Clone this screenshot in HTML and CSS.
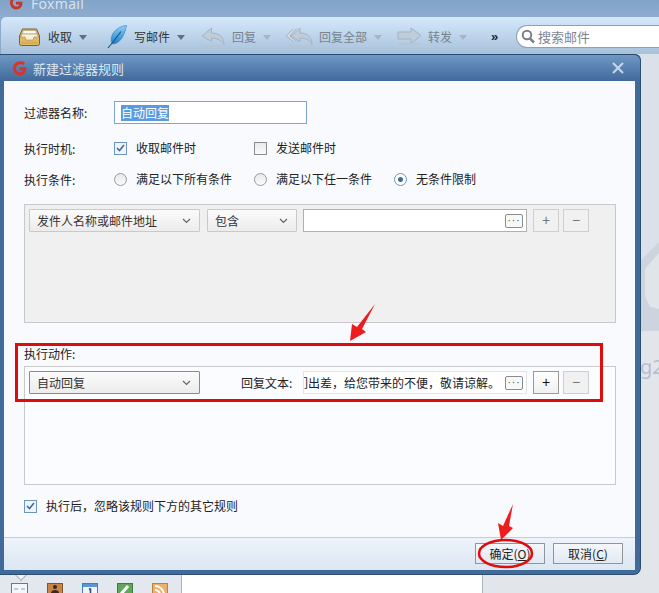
FILE: index.html
```html
<!DOCTYPE html>
<html lang="zh">
<head>
<meta charset="utf-8">
<title>Foxmail</title>
<link rel="stylesheet" href="styles.css">
</head>
<body>
<div class="app">
  <header class="titlebar">
    <svg class="app-logo" width="14" height="14" viewBox="0 0 14 14"><path d="M11.500 2.500C8 .8 3.500 1.500 2.500 5.500 1.700 9.500 4.500 12 7.200 12c2.800 0 4.800-2 4.800-4.800H7" fill="none" stroke="#c8352c" stroke-width="2.800"/></svg>
    <span class="app-name">Foxmail</span>
  </header>
  <nav class="toolbar">
    <div class="tool tool-inbox">
      <svg width="21" height="18" viewBox="0 0 21 18"><path d="M3.500 1h14l3 7v7.500a2 2 0 0 1-2 2h-16a2 2 0 0 1-2-2V8z" fill="#e3ba63" stroke="#7d6129"/><path d="M4.500 2.500h12l1.500 3.500H3z" fill="#fdfaf0" stroke="#a99a70" stroke-width=".6"/><path d="M3 6h15l1.500 3H15l-1 3H7L6 9H1.500z" fill="#f8f1da" stroke="#9c8a5c" stroke-width=".6"/><path d="M2 13.500h17v2.500H2z" fill="#cf9f48" opacity=".5"/></svg>
      <span>收取</span><i class="caret"></i>
    </div>
    <div class="tool tool-write">
      <svg width="20" height="24" viewBox="0 0 20 24"><defs><linearGradient id="feather" x1="0" y1="0" x2="0" y2="1"><stop offset="0" stop-color="#8fd0f5"/><stop offset="1" stop-color="#1f7fc8"/></linearGradient></defs><path d="M19.500 .5C13 1 7 5 4.800 11c-1.300 3.500-.5 6.500.7 8C12 19 17.500 12 19.500.5z" fill="url(#feather)" stroke="#2a7fc0" stroke-width=".6"/><path d="M14 6.500 6 17 1 23" fill="none" stroke="#14507f" stroke-width="1.100"/></svg>
      <span>写邮件</span><i class="caret"></i>
    </div>
    <div class="tool tool-reply off">
      <svg width="25" height="20" viewBox="0 0 25 20"><path d="M10.500 1 1 9l9.500 5.500V11c5 0 9.500 1.500 12.500 6.500C23 10 18 6 10.500 6z" fill="#bfccd9" stroke="#a5b4c4"/><path d="M2 18.500c6 1.200 14 1.200 21 0" fill="none" stroke="#b5c4d3" stroke-width="1.600"/></svg>
      <span>回复</span><i class="caret"></i>
    </div>
    <div class="tool tool-replyall off">
      <svg width="28" height="20" viewBox="0 0 28 20"><path d="M8 2 1 9l7.500 5.500M11.500 1.500 5 9l7 5.500" fill="#d0dbe6" stroke="#a5b4c4"/><path d="M15 1 6 9l9 5.500V11c5 0 9.500 1.500 12 6.500C27 10 22 6 15 6z" fill="#bfccd9" stroke="#a5b4c4"/><path d="M4 18.500c7 1.200 15 1.200 23 0" fill="none" stroke="#b5c4d3" stroke-width="1.600"/></svg>
      <span>回复全部</span><i class="caret"></i>
    </div>
    <div class="tool tool-forward off">
      <svg width="25" height="20" viewBox="0 0 25 20"><path d="M1 5h13V.8L24 8.500 14 16.500V12H1z" fill="#bfccd9" stroke="#a5b4c4"/><path d="M1 17h21" stroke="#b5c4d3" stroke-width="1.600"/></svg>
      <span>转发</span><i class="caret"></i>
    </div>
    <div class="more">»</div>
    <div class="search">
      <svg width="14" height="15" viewBox="0 0 14 15"><circle cx="6" cy="6" r="4.300" fill="none" stroke="#77818c" stroke-width="2"/><path d="m9 9.500 4 4" stroke="#77818c" stroke-width="2.500"/></svg>
      <span>搜索邮件</span>
    </div>
  </nav>
  <main class="workspace">
    <aside class="sidebar">
      <div class="tabs">
        <svg width="17" height="10" viewBox="0 0 17 10"><rect x=".5" y=".5" width="16" height="16" fill="#f4f7fa" stroke="#5d7c99"/><path d="M10 6h4M3 6h4" stroke="#8aa0b6"/></svg>
        <svg width="16" height="10" viewBox="0 0 16 10"><rect x=".5" y=".5" width="15" height="16" fill="#c8854a" stroke="#83552a"/><circle cx="8" cy="4" r="2" fill="#3a2a1c"/><path d="M4 10c0-2 2-3 4-3s4 1 4 3z" fill="#3a2a1c"/></svg>
        <svg width="16" height="10" viewBox="0 0 16 10"><rect x=".5" y=".5" width="15" height="16" fill="#f2f6fb" stroke="#3f7fc2"/><rect x="1" y="1" width="14" height="3" fill="#5b97d4"/><path d="M8.500 5.500V10M7 6.500l1.500-1" stroke="#27527f" stroke-width="1.600" fill="none"/></svg>
        <svg width="16" height="10" viewBox="0 0 16 10"><rect x=".5" y=".5" width="15" height="16" fill="#5fa65a" stroke="#3e7c3a"/><path d="m4 11 7-8" stroke="#fff" stroke-width="3"/></svg>
        <svg width="16" height="10" viewBox="0 0 16 10"><rect x=".5" y=".5" width="15" height="16" fill="#edb06c" stroke="#c08040"/><path d="M3 3a9 9 0 0 1 9 9M3 7a5 5 0 0 1 5 5" fill="none" stroke="#fff" stroke-width="2"/></svg>
      </div>
    </aside>
    <section class="mid"></section>
    <aside class="right">
      <svg class="watermark" width="19" height="92" viewBox="0 0 19 92"><path d="M0 21 19 2v89H0z" fill="#ccd4de"/><path d="M5 29 18 14h1v55l-9-2-5-11z" fill="#e0e5ea"/></svg>
      <div class="right-text">g2</div>
    </aside>
  </main>

  <div class="dialog">
    <div class="dialog-title">
      <svg width="15" height="15" viewBox="0 0 14 14"><path d="M11.500 2.500C8 .8 3.500 1.500 2.500 5.500 1.700 9.500 4.500 12 7.200 12c2.800 0 4.800-2 4.800-4.800H7" fill="none" stroke="#d8352a" stroke-width="2.800"/></svg>
      <span class="dialog-name">新建过滤器规则</span>
      <svg class="close" width="12" height="12" viewBox="0 0 12 12"><path d="m1 1 10 10M11 1 1 11" stroke="#c3d6e8" stroke-width="2.200"/></svg>
    </div>
    <div class="dialog-body">
      <div class="form">
        <div class="row row-name">
          <label class="label">过滤器名称:</label>
          <div class="name-input"><span class="selected">自动回复</span></div>
        </div>
        <div class="row row-time">
          <label class="label">执行时机:</label>
          <div class="opt"><i class="check on"><svg width="9" height="8" viewBox="0 0 9 8"><path d="m1 4 2.500 2.500L8 1" fill="none" stroke="#3f6a9a" stroke-width="1.600"/></svg></i>收取邮件时</div>
          <div class="opt"><i class="check"></i>发送邮件时</div>
        </div>
        <div class="row row-cond">
          <label class="label">执行条件:</label>
          <div class="opt"><i class="radio"></i>满足以下所有条件</div>
          <div class="opt"><i class="radio"></i>满足以下任一条件</div>
          <div class="opt"><i class="radio on"></i>无条件限制</div>
        </div>
        <div class="panel panel-cond">
          <div class="rule">
            <div class="select sel-wide"><span>发件人名称或邮件地址</span><svg width="9" height="6" viewBox="0 0 9 6"><path d="m1 1 3.500 3.500L8 1" fill="none" stroke="#666" stroke-width="1.200"/></svg></div>
            <div class="select sel-narrow"><span>包含</span><svg width="9" height="6" viewBox="0 0 9 6"><path d="m1 1 3.500 3.500L8 1" fill="none" stroke="#666" stroke-width="1.200"/></svg></div>
            <div class="value value-dark"><span class="value-text"></span><b class="dots">···</b></div>
            <div class="sq">+</div>
            <div class="sq">−</div>
          </div>
        </div>
        <div class="action-label">执行动作:</div>
        <div class="panel panel-action">
          <div class="rule">
            <div class="select sel-wide sel-active"><span>自动回复</span><svg width="9" height="6" viewBox="0 0 9 6"><path d="m1 1 3.500 3.500L8 1" fill="none" stroke="#666" stroke-width="1.200"/></svg></div>
            <div class="reply-label">回复文本:</div>
            <div class="value"><span class="value-text">们出差，给您带来的不便，敬请谅解。</span><b class="dots">···</b></div>
            <div class="sq sq-active">+</div>
            <div class="sq">−</div>
          </div>
        </div>
        <div class="opt opt-after"><i class="check on"><svg width="9" height="8" viewBox="0 0 9 8"><path d="m1 4 2.500 2.500L8 1" fill="none" stroke="#3f6a9a" stroke-width="1.600"/></svg></i>执行后，忽略该规则下方的其它规则</div>
      </div>
      <div class="dialog-foot">
        <button class="btn">确定(<u>O</u>)</button>
        <button class="btn">取消(<u>C</u>)</button>
      </div>
    </div>
  </div>

  <svg class="marks" width="659" height="593" viewBox="0 0 659 593">
    <rect x="16.500" y="344.500" width="585" height="56" fill="none" stroke="#e00c0c" stroke-width="3"/>
    <path d="M375 304 362 329 366 332 350 341 352 324 357 327z" fill="#ee1c1c"/>
    <path d="M513 504 509 526 513 528 501 540 498 523 503 526z" fill="#ee1c1c"/>
    <ellipse cx="505.500" cy="553.500" rx="26.500" ry="13.500" fill="none" stroke="#e00c0c" stroke-width="2.500"/>
  </svg>
</div>
</body>
</html>
```
FILE: styles.css
```css
* { box-sizing: border-box; }
html, body { margin: 0; padding: 0; }
body {
  width: 659px;
  height: 593px;
  overflow: hidden;
  font-family: "Noto Sans CJK SC", "Liberation Sans", sans-serif;
  font-size: 12px;
  color: #222;
}
.app {
  position: relative;
  width: 659px;
  height: 593px;
  display: flex;
  flex-direction: column;
  overflow: hidden;
  background: #8aa9cc;
}
.titlebar {
  height: 17px;
  flex: none;
  padding-left: 9px;
  display: flex;
  align-items: flex-start;
  gap: 8px;
  background: linear-gradient(#82a3c8, #8daccf);
  overflow: hidden;
}
.app-logo { margin-top: -4px; flex: none; }
.app-name {
  font-family: "Noto Sans", sans-serif;
  font-size: 14px;
  line-height: 14px;
  margin-top: -3px;
  color: #d6e2ee;
  letter-spacing: .3px;
}
.toolbar {
  height: 37px;
  flex: none;
  margin-left: 1px;
  padding-top: 8px;
  border-radius: 5px 0 0 0;
  display: flex;
  align-items: flex-start;
  background: linear-gradient(#d5e8fb, #a7c1da);
  position: relative;
}
.tool {
  display: flex;
  align-items: center;
  height: 23px;
  flex: none;
  color: #333;
}
.tool svg { flex: none; }
.tool span { line-height: 23px; }
.tool.off { color: #77828e; }
.caret {
  display: block;
  width: 0;
  height: 0;
  border-left: 4px solid transparent;
  border-right: 4px solid transparent;
  border-top: 5px solid #5f6f80;
  margin-left: 7px;
  margin-top: 1px;
}
.tool.off .caret { border-top-color: #a6b4c3; }
.tool-inbox { margin-left: 18px; width: 88px; }
.tool-inbox span { margin-left: 8px; }
.tool-write { width: 94px; }
.tool-write span { margin-left: 7px; }
.tool-reply { width: 84px; }
.tool-reply span { margin-left: 6px; }
.tool-replyall { width: 112px; }
.tool-replyall span { margin-left: 6px; }
.tool-forward { width: 94px; }
.tool-forward span { margin-left: 6px; }
.more {
  width: 25px;
  height: 23px;
  font-size: 13px;
  line-height: 23px;
  color: #223;
  font-weight: 700;
  font-family: "Liberation Sans", sans-serif;
}
.search {
  flex: 1;
  height: 23px;
  background: #fff;
  border: 1px solid #8fa0b2;
  border-right: 0;
  border-radius: 11px 0 0 11px;
  display: flex;
  align-items: center;
  gap: 3px;
  padding-left: 4px;
  font-size: 13px;
  color: #7d8690;
}
.workspace {
  flex: 1;
  display: flex;
  min-height: 0;
}
.sidebar {
  width: 182px;
  flex: none;
  display: flex;
  flex-direction: column;
  justify-content: flex-end;
  background: #fff;
}
.tabs {
  position: relative;
  height: 18px;
  background: #e3e8ee;
  border-right: 1px solid #aab4c0;
  padding: 8px 0 0 11px;
  display: flex;
  gap: 19px;
  align-items: flex-start;
  overflow: hidden;
}
.tabs::before {
  content: "";
  position: absolute;
  left: 16px;
  top: -6px;
  width: 9px;
  height: 9px;
  background: #f2f5f8;
  border-right: 1px solid #a4afbb;
  border-bottom: 1px solid #a4afbb;
  transform: rotate(45deg);
}
.mid { width: 300px; flex: none; background: #fff; }
.right {
  flex: 1;
  background: linear-gradient(#dbe1e8 277px, #e2e6eb 277px);
  display: flex;
  flex-direction: column;
  align-items: flex-end;
  overflow: hidden;
  padding-top: 186px;
  border-left: 1px solid #aab4c0;
}
.watermark { display: block; flex: none; }
.right-text {
  width: 19px;
  font-family: "Noto Sans", sans-serif;
  font-size: 20px;
  line-height: 22px;
  color: #b6c0cb;
  margin-top: 24px;
  white-space: nowrap;
}
.dialog {
  position: absolute;
  left: 0;
  top: 54px;
  width: 640px;
  height: 520px;
  display: flex;
  flex-direction: column;
  background: #3f6a9a;
  border-top: 1px solid #2c4c72;
  border-radius: 0 6px 6px 0;
  padding: 0 5px 4px 4px;
  box-shadow: 1px 0 0 #2c4c72, 0 1px 0 #2c4c72;
}
.dialog-title {
  height: 26px;
  flex: none;
  margin: 0 -5px 0 -4px;
  padding: 0 16px 0 12px;
  display: flex;
  align-items: center;
  gap: 6px;
  border-radius: 0 6px 0 0;
  background: linear-gradient(#6f98c5, #41699a);
}
.dialog-name { color: #dbe6f1; font-size: 13px; }
.close { margin-left: auto; }
.dialog-body {
  flex: 1;
  min-height: 0;
  display: flex;
  flex-direction: column;
  background: #f9fafe;
}
.form {
  flex: 1;
  padding: 20px 19px 0 20px;
}
.row { display: flex; align-items: center; }
.label { width: 90px; flex: none; }
.row-name { height: 23px; }
.name-input {
  width: 193px;
  height: 23px;
  background: #fff;
  border: 1px solid #7fa6cf;
  padding: 2px 6px;
  display: flex;
  align-items: center;
}
.selected {
  background: #5a9ae0;
  color: #fff;
  line-height: 16px;
  font-size: 12px;
}
.row-time { height: 20px; margin-top: 14px; }
.row-cond { height: 20px; margin-top: 11px; }
.opt {
  width: 140px;
  flex: none;
  display: flex;
  align-items: center;
  gap: 9px;
  line-height: 18px;
}
.check, .radio {
  width: 13px;
  height: 13px;
  flex: none;
  display: flex;
  align-items: center;
  justify-content: center;
  background: linear-gradient(#e9e9e9, #fafafa);
  border: 1px solid #8c8c8c;
}
.check.on { border-color: #6c95c2; background: #eef4fb; }
.radio { border-radius: 50%; border-color: #9a9a9a; }
.radio.on { border-color: #6c95c2; background: #fff; }
.radio.on::after {
  content: "";
  display: block;
  width: 5px;
  height: 5px;
  border-radius: 50%;
  background: #3f6a9a;
}
.panel {
  width: 592px;
  height: 119px;
  padding: 4px;
  border: 1px solid #c9c9c9;
}
.panel-cond { margin-top: 15px; background: #f0f0f0; }
.panel-action { background: #fbfcff; }
.action-label { margin-top: 22px; height: 21px; line-height: 18px; }
.rule { display: flex; align-items: stretch; height: 23px; }
.select {
  height: 23px;
  padding: 0 8px 0 7px;
  display: flex;
  align-items: center;
  justify-content: space-between;
  background: linear-gradient(#fbfbfb, #ececec);
  border: 1px solid #c9c9c9;
  border-radius: 1px;
  color: #333;
}
.sel-wide { width: 171px; margin-right: 7px; }
.sel-narrow { width: 90px; margin-right: 6px; }
.sel-active { border-color: #8a8a8a; margin-right: 0; }
.reply-label { width: 103px; padding-left: 41px; line-height: 23px; flex: none; white-space: nowrap; }
.value {
  width: 224px;
  height: 23px;
  background: #fff;
  border: 1px solid #e1e3e6;
  display: flex;
  align-items: center;
  justify-content: flex-end;
  overflow: hidden;
  padding-right: 2px;
  margin-right: 6px;
}
.value-dark { border-color: #b0b0b0; }
.value-text {
  flex: none;
  white-space: nowrap;
  margin-right: 5px;
  color: #222;
}
.dots {
  flex: none;
  width: 18px;
  height: 14px;
  background: #f8f8f8;
  border: 1px solid #8c8c8c;
  border-radius: 2px;
  font-family: "Liberation Sans", sans-serif;
  font-weight: 400;
  font-size: 10px;
  line-height: 11px;
  letter-spacing: 1px;
  text-align: center;
  color: #444;
  margin-right: 1px;
}
.sq {
  width: 26px;
  height: 23px;
  margin-right: 4px;
  background: #f1f1f1;
  border: 1px solid #cfcfcf;
  text-align: center;
  line-height: 20px;
  font-family: "Liberation Sans", sans-serif;
  font-size: 14px;
  color: #777;
}
.sq-active { border-color: #999; color: #111; background: linear-gradient(#fff, #f0f0f0); }
.opt-after { width: auto; margin-top: 12px; }
.dialog-foot {
  height: 33px;
  flex: none;
  padding: 5px 12px 0 0;
  display: flex;
  justify-content: flex-end;
  gap: 8px;
  border-top: 1px solid #c5cdd8;
  background: linear-gradient(#eef3fa, #dbe7f4);
}
.btn {
  width: 70px;
  height: 21px;
  padding: 0;
  font: inherit;
  line-height: 18px;
  color: #222;
  border: 1px solid #8e959d;
  background: linear-gradient(#f4f7fb, #e2e9f1);
}
.marks {
  position: absolute;
  left: 0;
  top: 0;
  pointer-events: none;
}
```
